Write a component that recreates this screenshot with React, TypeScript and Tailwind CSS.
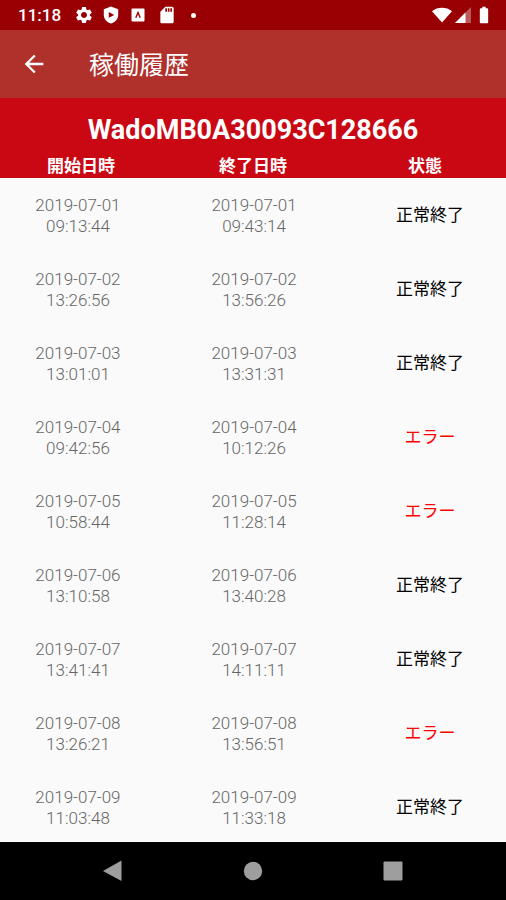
import {
  MdArrowBack,
  MdBatteryFull,
  MdSdCard,
  MdSettings,
} from "react-icons/md";

const records = [
  { date: "2019-07-01", start: "09:13:44", end: "09:43:14", ok: true },
  { date: "2019-07-02", start: "13:26:56", end: "13:56:26", ok: true },
  { date: "2019-07-03", start: "13:01:01", end: "13:31:31", ok: true },
  { date: "2019-07-04", start: "09:42:56", end: "10:12:26", ok: false },
  { date: "2019-07-05", start: "10:58:44", end: "11:28:14", ok: false },
  { date: "2019-07-06", start: "13:10:58", end: "13:40:28", ok: true },
  { date: "2019-07-07", start: "13:41:41", end: "14:11:11", ok: true },
  { date: "2019-07-08", start: "13:26:21", end: "13:56:51", ok: false },
  { date: "2019-07-09", start: "11:03:48", end: "11:33:18", ok: true },
];

function StatusBar() {
  return (
    <div className="flex h-[30px] shrink-0 items-center justify-between bg-[#980004] pr-3 pl-[18px] text-white">
      <div className="flex items-center">
        <span className="w-[56px] pt-px text-[17px] leading-[29px] font-medium">11:18</span>
        <MdSettings className="mr-[9px] size-5" />
        <svg viewBox="0 0 16 18" className="mr-3 h-[18px] w-4">
          <path
            fill="currentColor"
            fillRule="evenodd"
            d="M8 .5l7.200 2.800V9c0 4-2.900 7.200-7.200 8.500C3.700 16.200.8 13 .8 9V3.300zM5.800 6v5.800l5.400-2.900z"
          />
        </svg>
        <svg viewBox="0 0 14 14" className="mr-3 size-[14px]">
          <rect x=".5" y=".5" width="13" height="13" rx="1" fill="currentColor" />
          <path d="M4.800 9.800L7 4.600 9.200 9.800" fill="none" stroke="#980004" strokeWidth="1.400" />
        </svg>
        <MdSdCard className="mr-[14px] size-5" />
        <span className="size-[5px] rounded-full bg-white" />
      </div>
      <div className="flex items-center">
        <svg viewBox="0 0 20 16" className="mr-[3px] h-4 w-5">
          <path fill="currentColor" d="M0 4.200C5.500-.4 14.500-.4 20 4.200L10 15.500z" />
        </svg>
        <svg viewBox="0 0 16 16" className="mr-[3px] size-4">
          <path fill="currentColor" fillOpacity="0.350" d="M16 0v16H0z" />
          <path fill="currentColor" d="M10.500 5.500V16H0z" />
        </svg>
        <MdBatteryFull className="size-5" />
      </div>
    </div>
  );
}

function AppBar() {
  return (
    <header className="flex h-[68px] shrink-0 items-center bg-[#b0302c] pl-5 text-white">
      <button type="button" aria-label="戻る" className="mr-[41px]">
        <MdArrowBack className="size-7" />
      </button>
      <h1 className="pt-1 text-[25px] leading-[30px]">稼働履歴</h1>
    </header>
  );
}

function HistoryTable() {
  return (
    <table className="w-full table-fixed border-collapse text-center">
      <colgroup>
        <col className="w-[32%]" />
        <col />
        <col className="w-[32%]" />
      </colgroup>
      <thead className="bg-[#ca0814] text-white">
        <tr>
          <th colSpan={3} className="h-[56px] p-0 pt-2 text-[27px] leading-[32px] font-bold">
            WadoMB0A30093C128666
          </th>
        </tr>
        <tr className="h-6 align-top text-[17px] leading-6 font-bold">
          <th scope="col" className="p-0">開始日時</th>
          <th scope="col" className="p-0">終了日時</th>
          <th scope="col" className="p-0">状態</th>
        </tr>
      </thead>
      <tbody>
        {records.map((record) => (
          <tr
            key={record.date}
            className="h-[74px] text-[17px] leading-[21px] font-light text-[#666666]"
          >
            <td className="p-0 pt-0.5 pr-1.5">
              {record.date}
              <br />
              {record.start}
            </td>
            <td className="p-0 pt-0.5 pl-0.5">
              {record.date}
              <br />
              {record.end}
            </td>
            <td className={`p-0 pt-px pl-2.5 font-normal ${record.ok ? "text-black" : "text-[#ff0000]"}`}>
              {record.ok ? "正常終了" : "エラー"}
            </td>
          </tr>
        ))}
      </tbody>
    </table>
  );
}

function NavigationBar() {
  return (
    <nav className="flex h-[58px] shrink-0 items-center justify-center gap-[120px] bg-black text-[#9e9e9e]">
      <button type="button" aria-label="戻る">
        <svg viewBox="0 0 20 22" className="h-[22px] w-5">
          <path fill="currentColor" d="M18.500.5v20.600L0 11z" />
        </svg>
      </button>
      <button type="button" aria-label="ホーム">
        <svg viewBox="0 0 20 20" className="size-5">
          <circle cx="10" cy="10" r="9.200" fill="currentColor" />
        </svg>
      </button>
      <button type="button" aria-label="最近使ったアプリ">
        <svg viewBox="0 0 20 20" className="size-5">
          <rect x=".5" y=".5" width="19" height="19" rx="1" fill="currentColor" />
        </svg>
      </button>
    </nav>
  );
}

export default function App() {
  return (
    <div
      lang="ja"
      className="flex h-screen flex-col bg-[#fafafa] font-[Roboto,'Noto_Sans_CJK_JP',sans-serif]"
    >
      <StatusBar />
      <AppBar />
      <main className="min-h-0 flex-1 overflow-hidden">
        <HistoryTable />
      </main>
      <NavigationBar />
    </div>
  );
}
